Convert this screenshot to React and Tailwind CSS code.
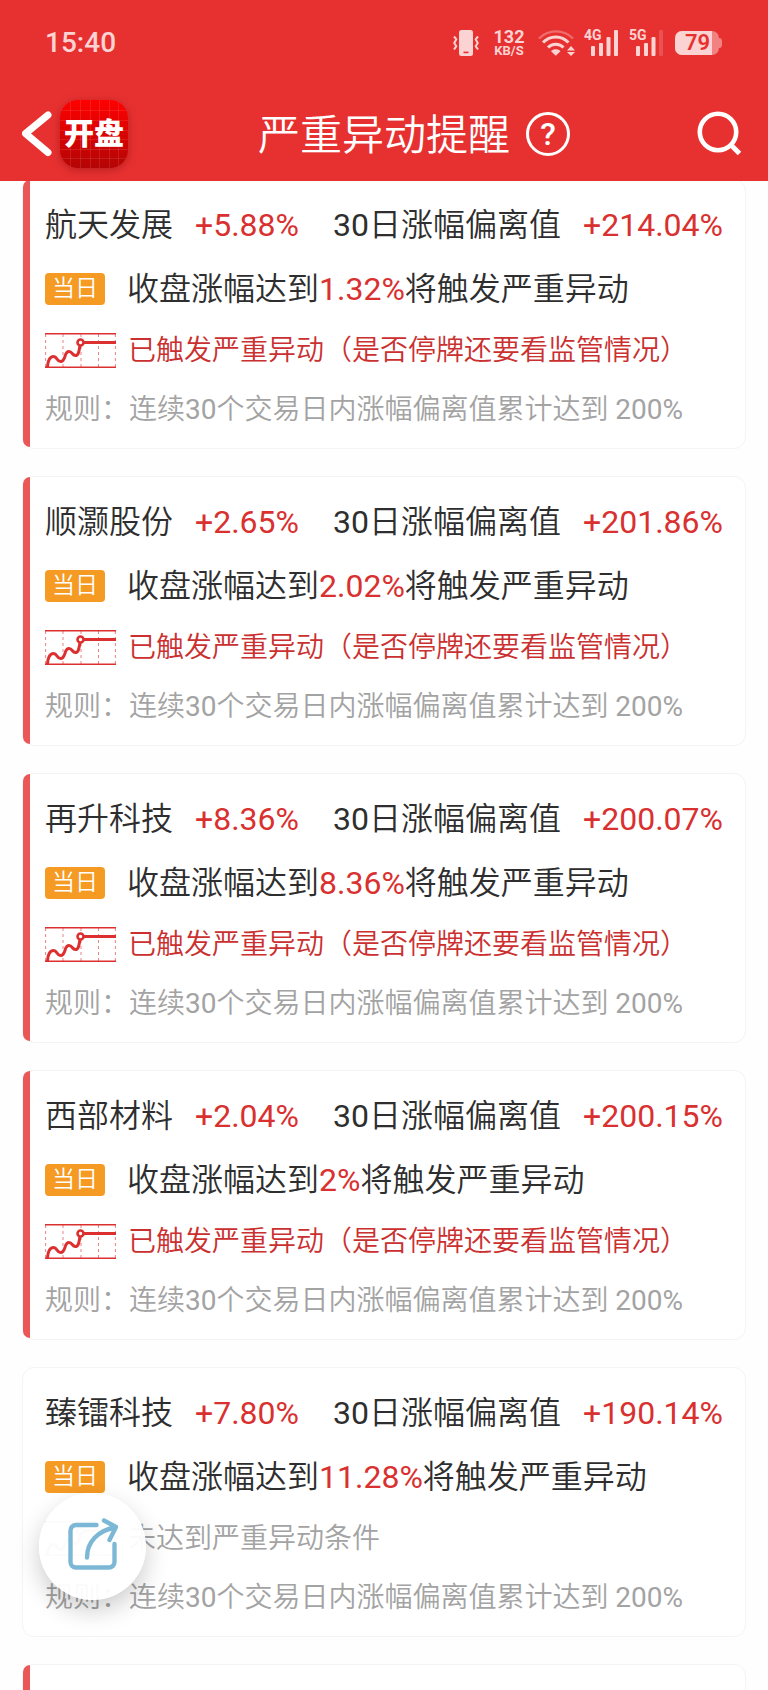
const STOCKS = [
  { id: 1, name: '航天发展', change: '+5.88%', deviation: '+214.04%', target: '1.32%', triggered: true },
  { id: 2, name: '顺灏股份', change: '+2.65%', deviation: '+201.86%', target: '2.02%', triggered: true },
  { id: 3, name: '再升科技', change: '+8.36%', deviation: '+200.07%', target: '8.36%', triggered: true },
  { id: 4, name: '西部材料', change: '+2.04%', deviation: '+200.15%', target: '2%', triggered: true },
  { id: 5, name: '臻镭科技', change: '+7.80%', deviation: '+190.14%', target: '11.28%', triggered: false },
];

function VibrateIcon() {
  return (
    <svg width="26" height="26" viewBox="0 0 26 26" fill="none">
      <rect x="6" y="0" width="14" height="26" rx="2.5" fill="#fcd3d3" />
      <path d="M10.5 22.4h5" stroke="#e73131" strokeWidth="1.6" />
      <path
        d="M1 6.5l2.4 2.8L1.2 13l2.2 3.2L1 19.5M25 6.5l-2.4 2.8 2.2 3.7-2.2 3.2 2.4 3.3"
        stroke="#fcd3d3"
        strokeWidth="2"
        strokeLinejoin="round"
      />
    </svg>
  );
}

function WifiIcon() {
  return (
    <svg width="37" height="26" viewBox="0 0 37 26" fill="none">
      <path d="M1 8.5C10-1 26-1 35 8.5" stroke="#f06c6c" strokeWidth="2.4" />
      <path d="M5 12.5C12 5 23.5 5 30.5 12.5" stroke="#fcd3d3" strokeWidth="3" />
      <path d="M10 17.5C14 13 21.5 13 25.5 17.5" stroke="#fcd3d3" strokeWidth="3" />
      <path d="M13 21.2C15.5 18.6 20 18.6 22.5 21.2L17.8 25.8z" fill="#fcd3d3" />
      <path d="M33 16l4 4.5h-8zM33 26l4-4h-8z" fill="#fcd3d3" />
    </svg>
  );
}

function Signal({ label, weak }) {
  return (
    <div className="relative">
      <span className="absolute -left-[7px] top-0 text-[14px] leading-[11px] font-bold">{label}</span>
      <svg width="27" height="26" viewBox="0 0 27 26" fill="#fcd3d3">
        <rect x="0" y="16" width="4" height="10" rx="1" />
        <rect x="8" y="13" width="4" height="13" rx="1" />
        <rect x="15.5" y="7" width="4" height="19" rx="1" />
        <rect x="23" y="0" width="4" height="26" rx="1" fillOpacity={weak ? 0.2 : 1} />
      </svg>
    </div>
  );
}

function Battery() {
  return (
    <div className="flex items-center">
      <div className="flex h-6 w-11 overflow-hidden rounded-[7px] bg-[#f28282]">
        <span className="flex w-[37px] items-center justify-center bg-[#fcd3d3] pl-2 text-[22px] leading-6 font-semibold text-[#e73131]">
          79
        </span>
      </div>
      <span className="h-[10px] w-[3px] rounded-r-full bg-[#f28282]" />
    </div>
  );
}

function StatusBar() {
  return (
    <div className="flex h-[86px] items-center justify-between pr-[46px] pl-[45px] text-[#fcd3d3]">
      <time className="text-[28px] leading-8 font-medium">15:40</time>
      <div className="flex items-center">
        <VibrateIcon />
        <div className="ml-[14px] flex w-8 flex-col items-center">
          <span className="text-[18px] leading-4 font-bold">132</span>
          <span className="text-[13px] leading-3 font-bold">KB/S</span>
        </div>
        <div className="ml-[13px]"><WifiIcon /></div>
        <div className="ml-4"><Signal label="4G" /></div>
        <div className="ml-[18px]"><Signal label="5G" weak /></div>
        <div className="ml-3"><Battery /></div>
      </div>
    </div>
  );
}

function AppLogo() {
  return (
    <div className="relative flex size-[68px] items-center justify-center overflow-hidden rounded-[18px] bg-linear-to-b from-[#ff0000] to-[#b40404] shadow-[0_2px_8px_rgba(120,0,0,0.4)]">
      <svg className="absolute inset-0" width="68" height="68" viewBox="0 0 68 68" fill="none">
        <path
          d="M10.5 0v68M20.5 0v68M30.5 0v68M39.5 0v68M49.5 0v68M58.5 0v68M0 10.5h68M0 20.5h68M0 30.5h68M0 39.5h68M0 49.5h68M0 58.5h68"
          stroke="#fff"
          strokeOpacity="0.1"
        />
      </svg>
      <span className="relative text-[30px] leading-9 font-black text-white">开盘</span>
    </div>
  );
}

function NavBar() {
  return (
    <nav className="grid h-[95px] grid-cols-[1fr_auto_1fr] items-center px-[22px] text-white">
      <div className="flex items-center gap-2">
        <button type="button" aria-label="返回">
          <svg className="block" width="30" height="46" viewBox="0 0 30 46" fill="none">
            <path d="M26 4L3.5 22.5l22.5 19" stroke="currentColor" strokeWidth="7" strokeLinecap="round" strokeLinejoin="round" />
          </svg>
        </button>
        <AppLogo />
      </div>
      <h1 className="pt-1 text-[42px] leading-[48px] font-[350]">严重异动提醒</h1>
      <div className="flex items-center justify-between pr-1 pl-4">
        <button
          type="button"
          aria-label="说明"
          className="flex size-11 items-center justify-center rounded-full border-[3px] border-white text-[32px] leading-8 font-medium"
        >
          ?
        </button>
        <button type="button" aria-label="搜索">
          <svg className="block" width="45" height="45" viewBox="0 0 45 45" fill="none" stroke="currentColor">
            <circle cx="21" cy="21" r="18.2" strokeWidth="4.6" />
            <path d="M33.5 33.5L42.5 42.5" strokeWidth="5" />
          </svg>
        </button>
      </div>
    </nav>
  );
}

function TrendIcon({ active }) {
  const line = active ? '#dc3030' : '#a6a6a6';
  return (
    <svg className="shrink-0" width="71" height="35" viewBox="0 0 71 35" fill="none" stroke={line}>
      <path d="M0 .8h71M0 34.2h71" strokeWidth="1.6" />
      <path d="M.6 1v33M18 1v33M36 1v33M53.5 1v33M70.4 1v33" strokeOpacity="0.6" strokeDasharray="3 3" />
      <path
        d="M2.5 34C2.5 28 5 23.5 8.5 23.5C12.5 23.5 11.5 28.5 15.5 28.5C21.5 28.5 18.5 18.5 24 18.5C27.5 18.5 27 22.5 30.5 22.5C34 22.5 34 17 35 12.5M38.5 9.5H71"
        strokeWidth="3"
      />
      <circle cx="35.5" cy="9.5" r="3" fill="#fff" strokeWidth="2.6" />
    </svg>
  );
}

function Card({ active, children }) {
  return (
    <li className="relative h-[270px] shrink-0 rounded-xl border border-[#f4f4f4] bg-white px-[22px] pt-[29px]">
      {active && <span className="absolute top-0 bottom-px left-0 w-[7px] rounded-l-lg bg-[#eb5757]" />}
      {children}
    </li>
  );
}

function StockCard({ stock }) {
  return (
    <Card active={stock.triggered}>
      <div className="flex justify-between text-[32px] leading-8 whitespace-nowrap">
        <div className="flex gap-[22px]">
          <h2>{stock.name}</h2>
          <span className="font-normal text-[#d93030]">{stock.change}</span>
        </div>
        <div className="flex gap-[22px]">
          <span><span className="font-normal">30</span>日涨幅偏离值</span>
          <span className="font-normal text-[#d93030]">{stock.deviation}</span>
        </div>
      </div>

      <div className="mt-8 flex items-center gap-[22px] text-[32px] leading-8 whitespace-nowrap">
        <span className="flex h-8 w-[60px] items-center justify-center rounded bg-[#f59a23] text-[23px] text-white">当日</span>
        <p>
          收盘涨幅达到<span className="font-normal text-[#d93030]">{stock.target}</span>将触发严重异动
        </p>
      </div>

      <div className="mt-7 flex h-[35px] items-center gap-3 text-[28px] leading-8 whitespace-nowrap">
        <TrendIcon active={stock.triggered} />
        {stock.triggered ? (
          <p className="text-[#cb3030]">已触发严重异动（是否停牌还要看监管情况）</p>
        ) : (
          <p className="text-[#a3a3a3]">未达到严重异动条件</p>
        )}
      </div>

      <p className="mt-[26px] text-[28px] leading-8 whitespace-nowrap text-[#a3a3a3]">
        规则：连续<span className="font-normal">30</span>个交易日内涨幅偏离值累计达到 <span className="font-normal">200%</span>
      </p>
    </Card>
  );
}

function ShareButton() {
  return (
    <button
      type="button"
      aria-label="分享"
      className="fixed bottom-[90px] left-[39px] flex size-[107px] items-center justify-center rounded-full bg-white/95 pb-1.5 shadow-[0_10px_24px_rgba(0,0,0,0.2)]"
    >
      <svg width="50" height="52" viewBox="0 0 50 52" fill="none" stroke="#7cb8d6" strokeWidth="4.4" strokeLinecap="round" strokeLinejoin="round">
        <path d="M28.5 7H8a5.5 5.5 0 0 0-5.5 5.5V44A5.5 5.5 0 0 0 8 49.5h33A5.5 5.5 0 0 0 46.5 44V26" />
        <path d="M19 39.5C19 24 30 12.5 47 9.5M36 2.5l12 6.5-6.5 13" />
      </svg>
    </button>
  );
}

export default function App() {
  return (
    <div
      lang="zh-CN"
      className="flex h-screen flex-col overflow-hidden bg-[#fefefe] font-[Roboto,'Noto_Sans_CJK_SC',sans-serif] font-[350] text-[#2e2e2e]"
    >
      <header className="z-10 shrink-0 bg-[#e73131]">
        <StatusBar />
        <NavBar />
      </header>

      <main className="min-h-0 flex-1 overflow-y-auto px-[22px] [scrollbar-width:none]">
        <ul className="-mt-0.5 flex flex-col gap-[27px]">
          {STOCKS.map((stock) => (
            <StockCard key={stock.id} stock={stock} />
          ))}
          <Card active />
        </ul>
      </main>

      <ShareButton />
    </div>
  );
}
